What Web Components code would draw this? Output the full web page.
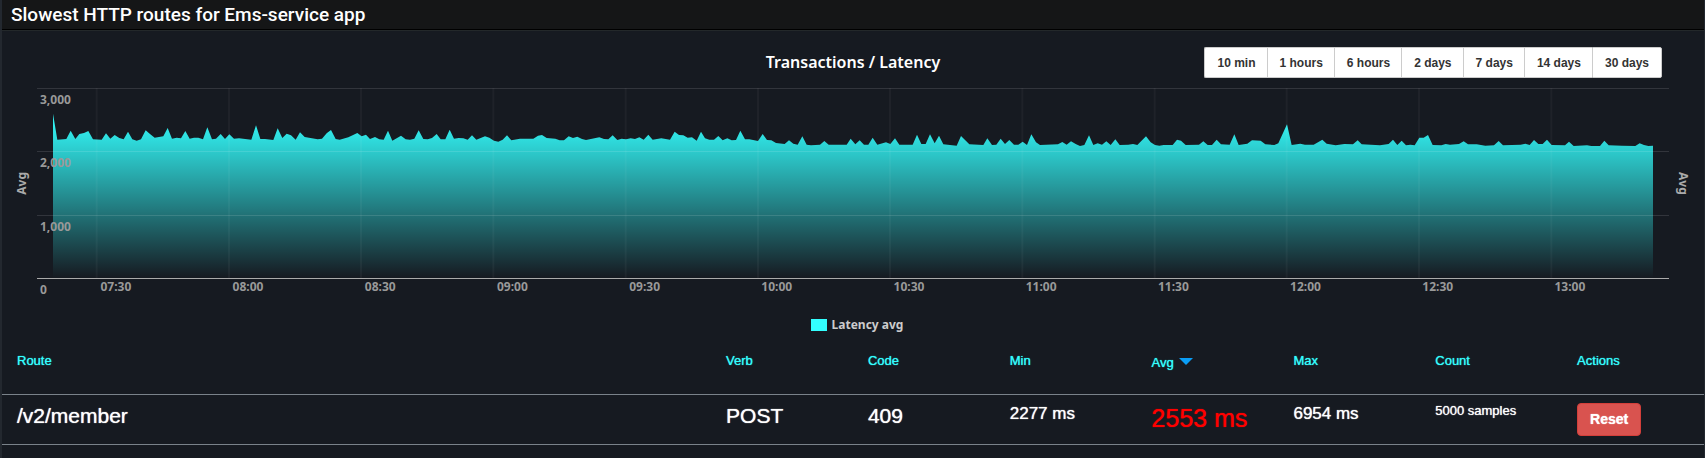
<!DOCTYPE html>
<html lang="en">
<head>
<meta charset="utf-8">
<title>Slowest HTTP routes</title>
<style>
  html { background: #161a21; }
  body { margin: 0; }
</style>
</head>
<body>
<app-panel>
  <span slot="title">Slowest HTTP routes for Ems-service app</span>
  <chart-toolbar>Transactions / Latency</chart-toolbar>
  <latency-chart></latency-chart>
  <chart-legend>Latency avg</chart-legend>
  <routes-table></routes-table>
</app-panel>

<script>
class AppPanel extends HTMLElement {
  constructor() {
    super();
    this.attachShadow({ mode: 'open' }).innerHTML = `
      <style>
        :host { display: block; box-sizing: border-box; min-height: 100vh; color: #fff;
          border-left: 2px solid #23282f; border-right: 1px solid #23282f;
          background: #161a21; font-family: "Liberation Sans", Arial, sans-serif; }
        header { box-sizing: border-box; height: 31px; padding: 0 9px; background: #151617;
          border-bottom: 1px solid #23282a; box-shadow: inset 0 -1px #000; }
        h1 { margin: 0; font: 500 19px/30px Roboto, sans-serif; }
      </style>
      <header><h1><slot name="title"></slot></h1></header>
      <slot></slot>`;
  }
}

class ChartToolbar extends HTMLElement {
  constructor() {
    super();
    const ranges = ['10 min', '1 hours', '6 hours', '2 days', '7 days', '14 days', '30 days'];
    this.attachShadow({ mode: 'open' }).innerHTML = `
      <style>
        :host { display: grid; grid-template-columns: 1fr auto 1fr; height: 57px; }
        h2 { grid-column: 2; margin: 19px 0 0; font: 600 16px/24px "Noto Sans", sans-serif; }
        .ranges { display: flex; justify-self: end; align-self: start; margin: 16px 42px 0 0; }
        button { box-sizing: border-box; height: 31px; padding: 0 11px 0 12px; border: 1px solid #ccc;
          border-right-width: 0; background: #fff; color: #333; white-space: nowrap;
          font: bold 12px/16px "Liberation Sans", Arial, sans-serif; }
        button:first-child { border-radius: 2px 0 0 2px; }
        button:last-child { border-right-width: 1px; border-radius: 0 2px 2px 0; padding-right: 12px; }
      </style>
      <h2><slot></slot></h2>
      <div class="ranges" role="group" aria-label="Time range">
        ${ranges.map(r => `<button type="button">${r}</button>`).join('')}
      </div>`;
  }
}

/* Samples in five blocks: where the block starts along the time axis, then
   "time,depth" pairs. The plot is 4896 units wide and 570 units deep. */
const SAMPLES = [
  [9, '39,43 52,121 79,119 92,94 106,119 118,104 132,101 145,95 159,120 185,121 198,102 211,118 224,107 238,116 251,120 264,97 277,120 290,124 303,120 317,93 330,104 344,115 370,111 383,86 396,118 410,115 423,117 436,95 449,118 462,115 475,115 489,120 502,84 516,120 528,118 542,104 555,119 568,105 582,118 597,117 634,121 648,78 661,119 675,119 700,122 713,87 727,116 740,103 753,108 767,121 780,99 794,113 833,120 846,118 860,102 873,92 887,119 899,121 925,114 952,101 965,111 978,106'],
  [999, '0,119 15,113 28,120 41,121 54,94 67,124 93,109 107,120 120,121 133,118 146,93 160,119 173,120 186,116 200,104 212,120 226,120 239,91 252,118 266,116 280,117 293,121 306,108 319,121 345,111 358,115 372,124 385,127 398,121 411,108 424,123 450,118 490,118 504,109 516,107 530,116 556,118 569,123 582,123 596,111 609,116 622,112 636,119 648,122 688,114 702,119 715,120 728,108 742,122 755,118 768,120 782,117 795,119 808,114 821,121 835,106 848,121 874,117 900,121 914,97 927,107 940,108 953,115 966,114 980,124 993,97'],
  [1989, '15,117 28,121 42,121 55,110 68,123 82,117 95,123 108,122 121,94 135,120 148,120 174,125 188,104 201,122 214,123 228,131 254,134 267,123 280,133 293,136 307,111 320,136 333,138 360,136 373,125 386,136 440,136 452,118 466,135 479,123 492,136 505,136 518,115 532,136 558,129 571,134 585,117 598,136 638,136 651,106 664,134 677,134 690,105 704,132 717,109 730,135 770,139 783,110 808,135 850,137 862,117 876,137 889,136 902,118 915,134 928,122 942,136 955,136 968,127 981,137 994,105'],
  [2979, '18,129 30,137 84,135 97,128 110,136 123,126 137,134 150,140 163,137 177,108 190,137 203,132 216,136 229,126 242,137 256,120 269,137 295,136 309,134 322,137 348,111 362,129 375,137 388,139 401,137 428,137 441,121 453,124 467,137 507,136 520,126 533,137 546,137 560,121 573,135 599,136 613,105 626,137 652,133 666,123 692,124 706,135 733,137 745,132 771,75 785,137 811,133 825,136 851,136 877,121 890,133 917,138 943,134 969,135 983,123'],
  [3969, '5,135 60,138 86,134 99,121 112,137 125,124 138,138 151,136 164,138 178,115 191,115 204,107 218,137 244,138 257,134 270,136 297,134 311,126 324,135 350,135 376,139 402,138 416,125 429,138 482,136 496,133 509,137 522,122 535,134 548,134 561,121 575,137 615,138 627,127 641,140 681,138 694,140 720,140 733,124 746,138 786,139 826,140 839,132 852,137 865,140 879,139'],
];
const DEPTH_OFFSET = 34;
const TIMES = ['07:30', '08:00', '08:30', '09:00', '09:30', '10:00', '10:30', '11:00', '11:30', '12:00', '12:30', '13:00'];

class LatencyChart extends HTMLElement {
  constructor() {
    super();
    const points = SAMPLES.flatMap(([start, list]) => list.split(' ').map(pair => {
      const [x, y] = pair.split(',').map(Number);
      return [start + x, y + DEPTH_OFFSET];
    }));
    const line = points.map(p => p.join(' ')).join('L');
    const first = points[0][0], last = points[points.length - 1][0];
    const vertical = TIMES.map((t, i) => `M${Math.round(179 + i * 396.7)} 0V570`).join('');
    this.attachShadow({ mode: 'open' }).innerHTML = `
      <style>
        :host { display: grid; grid-template-columns: 35px 1fr 35px; color: #999;
          font: bold 12px/16px "Noto Sans", sans-serif; }
        .axis { writing-mode: vertical-rl; place-self: center start; margin-left: 6px; color: #aaa; }
        .axis.left { transform: rotate(180deg); margin-left: 12px; }
        .plot { display: grid; height: 190px; border-bottom: 1px solid #aaa; }
        .plot > * { grid-area: 1 / 1; min-width: 0; min-height: 0; }
        svg { display: block; width: 100%; height: 190px; }
        .values { display: grid; grid-template-rows: repeat(3, 1fr); padding-left: 3px; }
        .values span { padding-top: 4px; }
        .times { grid-column: 2; display: grid; box-sizing: border-box; height: 24px; padding-left: 4px;
          grid-template-columns: 3.65% repeat(11, 8.12%) 1fr; white-space: nowrap; }
        .zero { padding-top: 3px; margin-left: -1px; }
      </style>
      <span class="axis left">Avg</span>
      <div class="plot">
        <svg viewBox="0 0 4896 570" preserveAspectRatio="none" role="img" aria-label="Average latency over time">
          <defs>
            <linearGradient id="fade" x1="0" y1="0" x2="0" y2="1">
              <stop offset="0" stop-color="#3ff"/>
              <stop offset="1" stop-color="#3ff" stop-opacity="0"/>
            </linearGradient>
          </defs>
          <path d="M${first} 570L${line}L${last} 570Z" fill="url(#fade)"/>
          <path d="M0 1.5H4896M0 190.5H4896M0 382.5H4896" stroke="#fff" stroke-opacity=".12" stroke-width="3" fill="none"/>
          <path d="${vertical}" stroke="#fff" stroke-opacity=".04" stroke-width="6" fill="none"/>
        </svg>
        <div class="values"><span>3,000</span><span>2,000</span><span>1,000</span></div>
      </div>
      <span class="axis">Avg</span>
      <div class="times"><span class="zero">0</span>${TIMES.map(t => `<span>${t}</span>`).join('')}</div>`;
  }
}

class ChartLegend extends HTMLElement {
  constructor() {
    super();
    this.attachShadow({ mode: 'open' }).innerHTML = `
      <style>
        :host { display: flex; justify-content: center; align-items: center; gap: 5px;
          height: 18px; padding: 13px 0 6px 8px; color: #ccc;
          font: bold 12px/18px "Noto Sans", sans-serif; }
        i { width: 16px; height: 12px; background: #3ff; }
      </style>
      <i></i><slot></slot>`;
  }
}

class RoutesTable extends HTMLElement {
  constructor() {
    super();
    this.attachShadow({ mode: 'open' }).innerHTML = `
      <style>
        :host { display: block; }
        table { width: 100%; table-layout: fixed; border-collapse: collapse; }
        col.route { width: 41.66%; }
        th, td { box-sizing: border-box; padding: 8px 15px 0; text-align: left; vertical-align: top;
          font-weight: normal; border-bottom: 1px solid #7a828a; white-space: nowrap;
          text-shadow: 0 0 1px currentColor; }
        th { height: 54px; padding-top: 10px; color: #3ff; font-size: 13px; line-height: 22px; }
        td { height: 50px; font-size: 21px; line-height: 26px; }
        td.medium { font-size: 17px; line-height: 22px; }
        td.small { font-size: 13px; line-height: 16px; }
        td.hot { color: #f00; font-size: 25px; line-height: 30px; }
        .sort { display: flex; align-items: center; gap: 5px; padding: 0; border: 0; background: none;
          color: inherit; font: inherit; line-height: 26px; text-shadow: inherit; }
        .sort svg { display: block; width: 14px; height: 7px; margin-bottom: 3px; }
        .reset { display: block; box-sizing: border-box; height: 33px; padding: 0 12px;
          border: 1px solid #d43f3a; border-radius: 4px; background: #d9534f; color: #fff;
          font: bold 14px/20px "Liberation Sans", Arial, sans-serif; text-shadow: inherit; }
      </style>
      <table>
        <colgroup><col class="route"><col span="7"></colgroup>
        <thead><tr>
          <th>Route</th><th>Verb</th><th>Code</th><th>Min</th>
          <th aria-sort="descending"><button type="button" class="sort">Avg<svg viewBox="0 0 14 7" aria-hidden="true"><path d="M0 0H14L7 7Z" fill="#0a9df5"/></svg></button></th>
          <th>Max</th><th>Count</th><th>Actions</th>
        </tr></thead>
        <tbody><tr>
          <td>/v2/member</td><td>POST</td><td>409</td>
          <td class="medium">2277 ms</td><td class="hot">2553 ms</td>
          <td class="medium">6954 ms</td><td class="small">5000 samples</td>
          <td><button type="button" class="reset">Reset</button></td>
        </tr></tbody>
      </table>`;
  }
}

customElements.define('app-panel', AppPanel);
customElements.define('chart-toolbar', ChartToolbar);
customElements.define('latency-chart', LatencyChart);
customElements.define('chart-legend', ChartLegend);
customElements.define('routes-table', RoutesTable);
</script>
</body>
</html>
